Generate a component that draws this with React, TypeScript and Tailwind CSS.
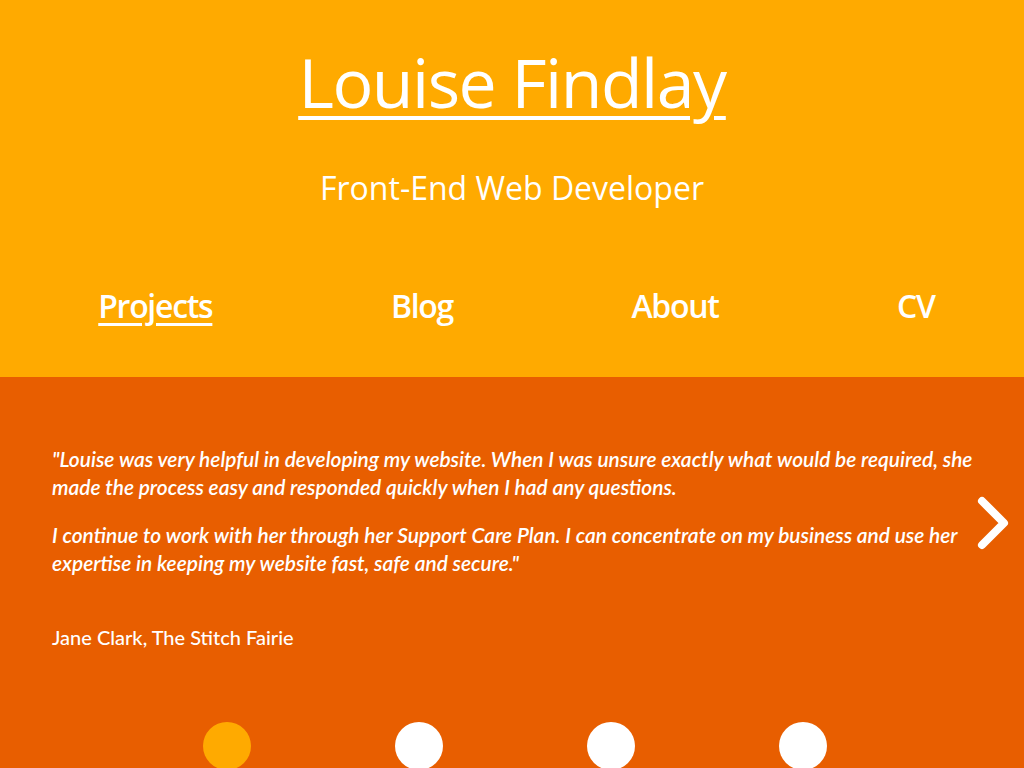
import React from "react";

const navItems = ["Projects", "Blog", "About", "CV"];

const Dots = () => (
  <div className="flex justify-center gap-[144px] pl-[5px] mt-[71px]">
    {[0, 1, 2, 3].map((i) => (
      <span
        key={i}
        className={
          "block w-12 h-12 rounded-full " +
          (i === 0 ? "bg-[#ffaa00]" : "bg-white")
        }
      />
    ))}
  </div>
);

export default function App() {
  return (
    <div className="w-[1024px] h-[768px] overflow-hidden font-['Lato',sans-serif] text-white">
      <header className="bg-[#ffaa00] h-[377px] flex flex-col items-center font-['Open_Sans',sans-serif]">
        <h1 className="mt-[34px] text-[68px] leading-[96px] underline decoration-[4px] underline-offset-[8px] tracking-[-1.5px]">
          <a href="#">Louise Findlay</a>
        </h1>
        <h2 className="mt-[36px] text-[32px] leading-[44px]">
          Front-End Web Developer
        </h2>
        <nav className="w-full mt-[74px]">
          <ul className="flex justify-around pl-[9px] text-[32px] leading-[44px] font-semibold tracking-[-1.3px]">
            {navItems.map((item, i) => (
              <li key={item}>
                <a
                  href="#"
                  className={i === 0 ? "underline decoration-[3px] underline-offset-[5px]" : ""}
                >
                  {item}
                </a>
              </li>
            ))}
          </ul>
        </nav>
      </header>

      <section className="bg-[#e85e00] h-[391px] pt-[68px] relative">
        <blockquote className="pl-[52px] pr-[40px] italic text-[20.9px] leading-[28px] font-semibold">
          <p>
            "Louise was very helpful in developing my website. When I was unsure exactly what would be
            required, she made the process easy and responded quickly when I had any questions.
          </p>
          <p className="mt-[20px]">
            I continue to work with her through her Support Care Plan. I can concentrate on my business
            and use her expertise in keeping my website fast, safe and secure."
          </p>
        </blockquote>
        <p className="pl-[52px] mt-[46px] text-[20px] leading-[28px] font-medium">
          Jane Clark, The Stitch Fairie
        </p>
        <button className="absolute right-[10px] top-[116px] w-[42px] h-[60px]">
          <svg viewBox="0 0 40 60" className="w-full h-full">
            <path
              d="M9 8 L31 30 L9 52"
              fill="none"
              stroke="white"
              strokeWidth="8"
              strokeLinecap="round"
              strokeLinejoin="round"
            />
          </svg>
        </button>
        <Dots />
      </section>
    </div>
  );
}
